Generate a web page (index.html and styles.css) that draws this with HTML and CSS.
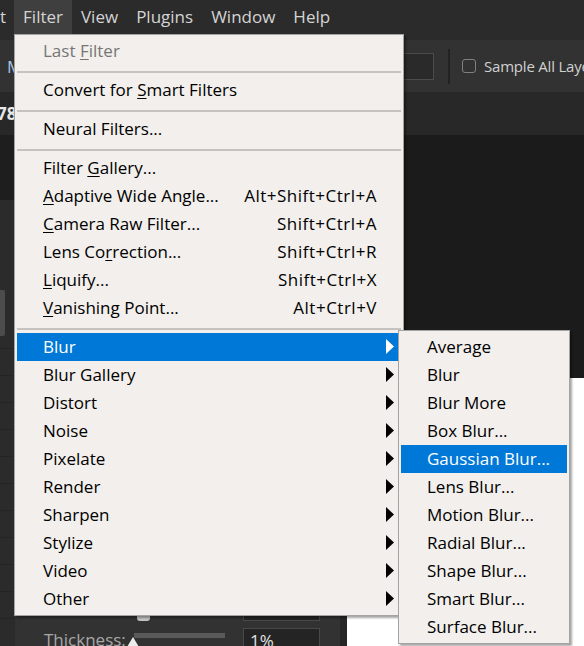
FILE: index.html
```html
<!DOCTYPE html>
<html>
<head>
<meta charset="utf-8">
<link rel="stylesheet" href="styles.css">
</head>
<body>
<div class="app">
  <div class="menubar">
    <span class="mb-item mb-cut">t</span>
    <span class="mb-item mb-active">Filter</span>
    <span class="mb-item">View</span>
    <span class="mb-item">Plugins</span>
    <span class="mb-item">Window</span>
    <span class="mb-item">Help</span>
  </div>
  <div class="options">
    <div class="opt-left"><span class="opt-m">M</span></div>
    <div class="opt-input"></div>
    <div class="opt-divider"></div>
    <span class="checkbox"></span>
    <span class="opt-label">Sample All Layers</span>
  </div>
  <div class="tabbar"><span class="tab">78)</span></div>
  <div class="workspace">
    <div class="panel">
      <div class="panel-head"></div>
      <div class="panel-body">
        <div class="rail">
          <div class="rail-box"></div>
          <div class="rail-gap"></div>
          <div class="rail-row"></div>
          <div class="rail-row"></div>
          <div class="rail-row"></div>
          <div class="rail-row"></div>
          <div class="rail-row"></div>
          <div class="rail-row"></div>
          <div class="rail-row"></div>
          <div class="rail-row"></div>
          <div class="rail-row"></div>
          <div class="rail-row"></div>
        </div>
        <div class="panel-main">
          <div class="prop-row">
            <span class="prop-label"></span>
            <div class="slider"><span class="thumb-tab"></span></div>
            <div class="prop-input"></div>
          </div>
          <div class="prop-row">
            <span class="prop-label">Thickness:</span>
            <div class="slider"><span class="track"></span><span class="thumb-tri"></span></div>
            <div class="prop-input">1%</div>
          </div>
        </div>
      </div>
    </div>
    <div class="canvas">
      <div class="canvas-dark"></div>
      <div class="canvas-image"></div>
    </div>
  </div>

  <div class="menu menu-main">
    <div class="mi disabled"><span class="mi-text">Last <u>F</u>ilter</span></div>
    <div class="sep"></div>
    <div class="mi"><span class="mi-text">Convert for <u>S</u>mart Filters</span></div>
    <div class="sep"></div>
    <div class="mi"><span class="mi-text">Neural Filters...</span></div>
    <div class="sep"></div>
    <div class="mi"><span class="mi-text">Filter <u>G</u>allery...</span></div>
    <div class="mi"><span class="mi-text"><u>A</u>daptive Wide Angle...</span><span class="sc">Alt+Shift+Ctrl+A</span></div>
    <div class="mi"><span class="mi-text"><u>C</u>amera Raw Filter...</span><span class="sc">Shift+Ctrl+A</span></div>
    <div class="mi"><span class="mi-text">Lens Co<u>r</u>rection...</span><span class="sc">Shift+Ctrl+R</span></div>
    <div class="mi"><span class="mi-text"><u>L</u>iquify...</span><span class="sc">Shift+Ctrl+X</span></div>
    <div class="mi"><span class="mi-text"><u>V</u>anishing Point...</span><span class="sc">Alt+Ctrl+V</span></div>
    <div class="sep"></div>
    <div class="mi sub active"><span class="mi-text">Blur</span><svg class="arrow" viewBox="0 0 8 15"><polygon points="0,0 8,7.5 0,15"/></svg></div>
    <div class="mi sub"><span class="mi-text">Blur Gallery</span><svg class="arrow" viewBox="0 0 8 15"><polygon points="0,0 8,7.5 0,15"/></svg></div>
    <div class="mi sub"><span class="mi-text">Distort</span><svg class="arrow" viewBox="0 0 8 15"><polygon points="0,0 8,7.5 0,15"/></svg></div>
    <div class="mi sub"><span class="mi-text">Noise</span><svg class="arrow" viewBox="0 0 8 15"><polygon points="0,0 8,7.5 0,15"/></svg></div>
    <div class="mi sub"><span class="mi-text">Pixelate</span><svg class="arrow" viewBox="0 0 8 15"><polygon points="0,0 8,7.5 0,15"/></svg></div>
    <div class="mi sub"><span class="mi-text">Render</span><svg class="arrow" viewBox="0 0 8 15"><polygon points="0,0 8,7.5 0,15"/></svg></div>
    <div class="mi sub"><span class="mi-text">Sharpen</span><svg class="arrow" viewBox="0 0 8 15"><polygon points="0,0 8,7.5 0,15"/></svg></div>
    <div class="mi sub"><span class="mi-text">Stylize</span><svg class="arrow" viewBox="0 0 8 15"><polygon points="0,0 8,7.5 0,15"/></svg></div>
    <div class="mi sub"><span class="mi-text">Video</span><svg class="arrow" viewBox="0 0 8 15"><polygon points="0,0 8,7.5 0,15"/></svg></div>
    <div class="mi sub"><span class="mi-text">Other</span><svg class="arrow" viewBox="0 0 8 15"><polygon points="0,0 8,7.5 0,15"/></svg></div>
  </div>

  <div class="menu menu-sub">
    <div class="mi"><span class="mi-text">Average</span></div>
    <div class="mi"><span class="mi-text">Blur</span></div>
    <div class="mi"><span class="mi-text">Blur More</span></div>
    <div class="mi"><span class="mi-text">Box Blur...</span></div>
    <div class="mi active"><span class="mi-text">Gaussian Blur...</span></div>
    <div class="mi"><span class="mi-text">Lens Blur...</span></div>
    <div class="mi"><span class="mi-text">Motion Blur...</span></div>
    <div class="mi"><span class="mi-text">Radial Blur...</span></div>
    <div class="mi"><span class="mi-text">Shape Blur...</span></div>
    <div class="mi"><span class="mi-text">Smart Blur...</span></div>
    <div class="mi"><span class="mi-text">Surface Blur...</span></div>
  </div>
</div>
</body>
</html>
```

FILE: styles.css
```css
* { box-sizing: border-box; }
html, body { margin: 0; padding: 0; }
body {
  width: 584px;
  height: 646px;
  overflow: hidden;
  background: #1b1b1b;
  font-family: "Open Sans", "Noto Sans", sans-serif;
  font-size: 17px;
}
.app {
  position: relative;
  width: 584px;
  height: 646px;
  overflow: hidden;
  display: flex;
  flex-direction: column;
}

/* menu bar */
.menubar {
  height: 40px;
  flex: none;
  background: #2b2b2b;
  display: flex;
  align-items: flex-start;
  color: #d4d4d4;
  white-space: nowrap;
}
.mb-item {
  height: 34px;
  line-height: 34px;
  padding: 0 9px;
}
.mb-cut { padding: 0 8px 0 0; }
.mb-active { background: #3f3f3f; }

/* options bar */
.options {
  height: 52px;
  flex: none;
  background: #323232;
  display: flex;
  align-items: center;
  white-space: nowrap;
  overflow: hidden;
}
.opt-left {
  width: 330px;
  flex: none;
  color: #a9c6e4;
  padding-left: 7px;
}
.opt-input {
  flex: none;
  width: 104px;
  height: 27px;
  border: 1px solid #4b4b4b;
  background: #2a2a2a;
}
.opt-divider {
  flex: none;
  width: 2px;
  height: 35px;
  margin-left: 14px;
  background: #222222;
}
.checkbox {
  flex: none;
  width: 14px;
  height: 14px;
  margin-left: 12px;
  border: 1px solid #808080;
  border-radius: 3px;
}
.opt-label {
  flex: none;
  margin-left: 8px;
  color: #d0d0d0;
  font-size: 15px;
  letter-spacing: -0.2px;
}

/* tab bar */
.tabbar {
  height: 43px;
  flex: none;
  background: #282828;
  display: flex;
  align-items: center;
}
.tab {
  color: #e8e8e8;
  font-weight: 700;
  margin-left: -3px;
}

/* workspace */
.workspace {
  flex: 1;
  display: flex;
  min-height: 0;
}
.panel {
  width: 347px;
  flex: none;
  display: flex;
  flex-direction: column;
  background: #2b2b2b;
}
.panel-head {
  height: 65px;
  flex: none;
  background: #1e1e1e;
}
.panel-body {
  flex: 1;
  display: flex;
  min-height: 0;
  overflow: hidden;
}
.rail {
  width: 15px;
  flex: none;
  background: #2b2b2b;
  padding-top: 90px;
}
.rail-box {
  width: 5px;
  height: 46px;
  background: #4c4c4c;
  border-radius: 0 2px 2px 0;
}
.rail-gap {
  height: 13px;
  border-bottom: 1px solid #242424;
}
.rail-row {
  height: 27px;
  border-bottom: 1px solid #242424;
}
.panel-main {
  flex: 1;
  padding-top: 394px;
  padding-left: 29px;
  border-right: 7px solid #262626;
  background: #323232;
}
.prop-row {
  display: grid;
  grid-template-columns: 90px 91px 95px;
  margin-bottom: 7px;
  height: 27px;
}
.prop-label {
  color: #a8a8a8;
  line-height: 23px;
}
.slider {
  position: relative;
}
.track {
  display: block;
  margin-top: 5px;
  height: 5px;
  background: #5a5a5a;
}
.thumb-tab {
  position: absolute;
  left: 3px;
  bottom: 0;
  width: 13px;
  height: 12px;
  background: #c4c4c4;
  border-radius: 0 0 3px 3px;
}
.thumb-tri {
  position: absolute;
  left: -7px;
  top: 9px;
  width: 0;
  height: 0;
  border-left: 6px solid transparent;
  border-right: 6px solid transparent;
  border-bottom: 10px solid #ececec;
}
.prop-input {
  margin-left: 18px;
  border: 1px solid #484848;
  background: #242424;
  color: #e2e2e2;
  padding-left: 6px;
  line-height: 23px;
  height: 27px;
}

.canvas {
  flex: 1;
  display: flex;
  flex-direction: column;
}
.canvas-dark {
  height: 243px;
  flex: none;
  background: #1b1b1b;
}
.canvas-image {
  flex: 1;
  background: #ffffff;
}

/* menus */
.menu {
  position: absolute;
  background: #f2efec;
  border: 1px solid #a3a3a3;
  padding: 2px;
  box-shadow: 2px 2px 2px rgba(0, 0, 0, 0.35);
  color: #000;
  white-space: nowrap;
}
.menu-main {
  left: 14px;
  top: 34px;
  width: 390px;
}
.menu-sub {
  left: 398px;
  top: 330px;
  width: 172px;
}
.mi {
  height: 28px;
  display: flex;
  align-items: center;
  padding-left: 26px;
  padding-right: 24px;
  padding-bottom: 2px;
}
.mi u {
  text-decoration-thickness: 1px;
  text-underline-offset: 2px;
}
.mi-text { flex: 1; }
.sc { letter-spacing: 0.5px; }
.mi.disabled { color: #767676; }
.mi.active { background: #0078d7; color: #ffffff; }
.mi.sub { padding-right: 7px; }
.arrow {
  width: 8px;
  height: 15px;
  fill: #000;
}
.mi.active .arrow { fill: #ffffff; }
.sep {
  height: 11px;
  padding-top: 6px;
}
.sep::before {
  content: "";
  display: block;
  height: 2px;
  background: #c6c2bf;
}
```
